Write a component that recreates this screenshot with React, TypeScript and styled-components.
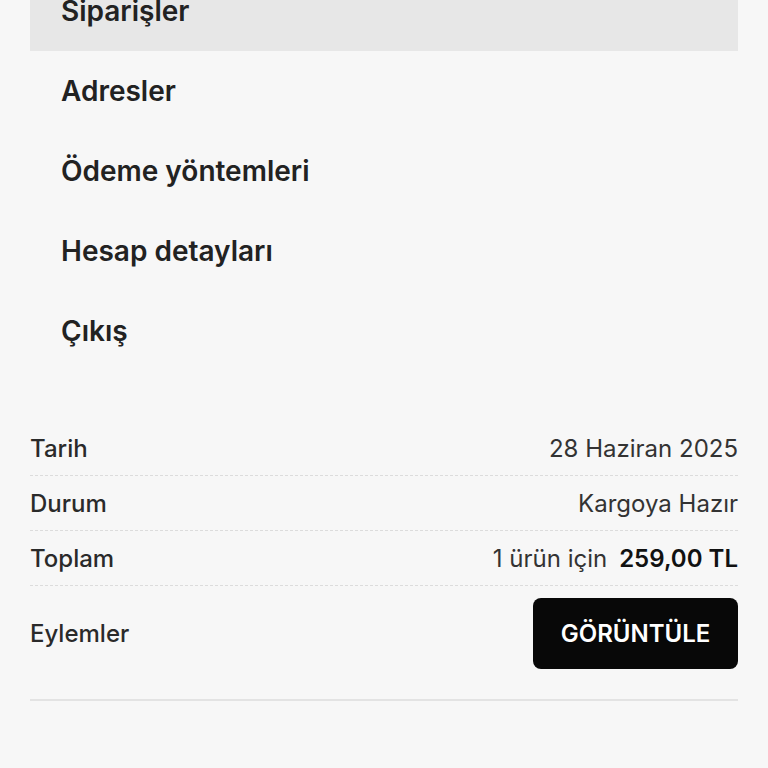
import React from "react";
import styled, { createGlobalStyle } from "styled-components";

const Global = createGlobalStyle`
  html, body { margin: 0; padding: 0; background: #f7f7f7; }
  body { font-family: Inter, "Noto Sans", sans-serif; color: #222; }
`;

const Page = styled.div`
  padding: 0 30px 60px;
  box-sizing: border-box;
`;

const Nav = styled.ul`
  list-style: none;
  margin: -29px 0 0;
  padding: 0;
`;

const NavItem = styled.li<{ $active?: boolean }>`
  height: 80px;
  display: flex;
  align-items: center;
  padding-left: 31px;
  font-size: 28px;
  font-weight: 600;
  color: #222;
  background: ${(p) => (p.$active ? "#e7e7e7" : "transparent")};
`;

const Table = styled.div`
  margin-top: 50px;
  border-bottom: 2px solid #e3e3e3;
  padding-bottom: 30px;
`;

const Row = styled.div<{ $last?: boolean }>`
  display: flex;
  align-items: center;
  justify-content: space-between;
  height: ${(p) => (p.$last ? "auto" : "55px")};
  padding: ${(p) => (p.$last ? "12px 0 0" : "0")};
  border-bottom: ${(p) => (p.$last ? "none" : "1px dashed #dcdcdc")};
  box-sizing: border-box;
`;

const Label = styled.span`
  font-size: 24px;
  font-weight: 500;
  color: #2a2a2a;
`;

const Value = styled.span`
  font-size: 24px;
  font-weight: 400;
  color: #333;
  display: flex;
  gap: 12px;
  align-items: baseline;
`;

const Strong = styled.strong`
  font-weight: 600;
  color: #111;
`;

const Button = styled.button`
  width: 205px;
  height: 71px;
  border: none;
  border-radius: 8px;
  background: #080808;
  color: #fff;
  font-family: Inter, "Noto Sans", sans-serif;
  font-size: 24px;
  font-weight: 600;
`;

export default function App() {
  return (
    <>
      <Global />
      <Page>
        <Nav>
          <NavItem $active>Siparişler</NavItem>
          <NavItem>Adresler</NavItem>
          <NavItem>Ödeme yöntemleri</NavItem>
          <NavItem>Hesap detayları</NavItem>
          <NavItem>Çıkış</NavItem>
        </Nav>
        <Table>
          <Row>
            <Label>Tarih</Label>
            <Value>28 Haziran 2025</Value>
          </Row>
          <Row>
            <Label>Durum</Label>
            <Value>Kargoya Hazır</Value>
          </Row>
          <Row>
            <Label>Toplam</Label>
            <Value>
              1 ürün için <Strong>259,00 TL</Strong>
            </Value>
          </Row>
          <Row $last>
            <Label>Eylemler</Label>
            <Button>GÖRÜNTÜLE</Button>
          </Row>
        </Table>
      </Page>
    </>
  );
}
